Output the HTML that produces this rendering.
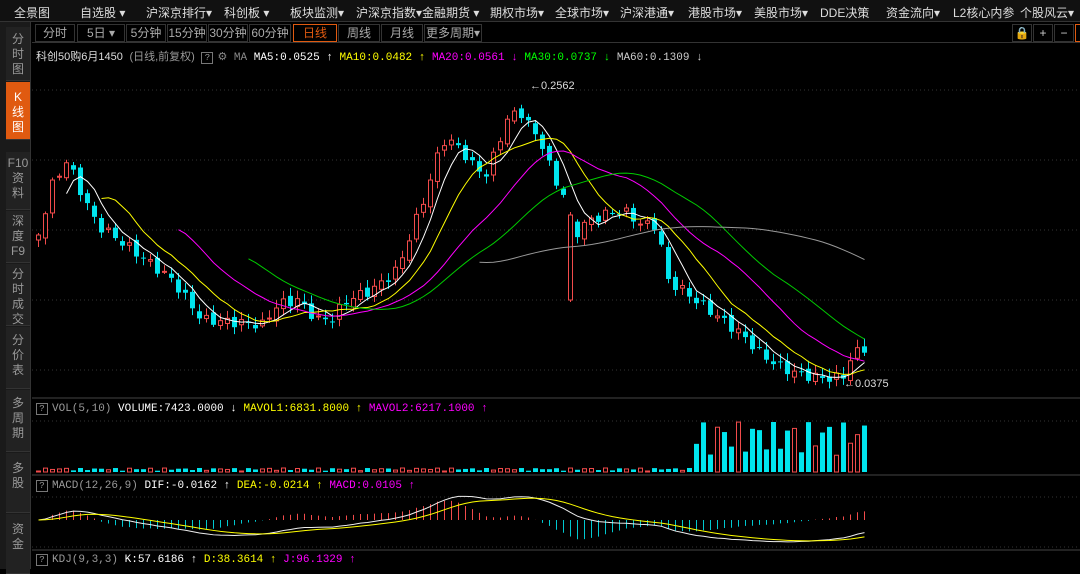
<!DOCTYPE html>
<html><head><meta charset="utf-8"><style>
*{margin:0;padding:0;box-sizing:border-box}
body{width:1080px;height:569px;background:#000;overflow:hidden;position:relative;font-family:"Liberation Sans","Noto Sans CJK SC",sans-serif;color:#ccc}
.top{position:absolute;left:0;top:0;width:1080px;height:22px;background:#111;border-bottom:1px solid #333;font-size:12px;color:#ddd}
.top span{position:absolute;top:4px;white-space:nowrap}
.side{position:absolute;left:0;top:22px;width:31px;height:547px;background:#1a1a1a;border-right:1px solid #333}
.side div{position:absolute;left:6px;width:24px;font-size:12px;color:#999;line-height:15px;text-align:center;background:#222;border-bottom:1px solid #333}
.bar{position:absolute;left:32px;top:22px;width:1048px;height:21px;border-bottom:1px solid #333;font-size:12px;color:#aaa}
.bar span{position:absolute;top:2px;height:18px;line-height:17px;border:1px solid #333;text-align:center}
.info{position:absolute;top:48px;font-size:11px;white-space:nowrap;font-family:"Liberation Mono","Noto Sans CJK SC",monospace}
.q{display:inline-block;width:12px;height:12px;border:1px solid #777;color:#999;font-size:9px;line-height:10px;text-align:center;margin-right:4px}
</style></head><body>
<div class="top">
<span style="left:14px">全景图</span><span style="left:80px">自选股 ▾</span><span style="left:146px">沪深京排行▾</span><span style="left:224px">科创板 ▾</span><span style="left:290px">板块监测▾</span><span style="left:356px">沪深京指数▾金融期货 ▾</span><span style="left:490px">期权市场▾</span><span style="left:555px">全球市场▾</span><span style="left:620px">沪深港通▾</span><span style="left:688px">港股市场▾</span><span style="left:754px">美股市场▾</span><span style="left:820px">DDE决策</span><span style="left:886px">资金流向▾</span><span style="left:953px">L2核心内参</span><span style="left:1020px">个股风云▾</span>
</div>
<div class="side">
<div style="top:5px;height:54px;padding-top:5px">分<br>时<br>图</div>
<div style="top:60px;height:58px;padding-top:8px;background:#e05a10;color:#fff">K<br>线<br>图</div>
<div style="top:130px;height:58px;padding-top:4px">F10<br>资<br>料</div>
<div style="top:189px;height:52px;padding-top:3px">深<br>度<br>F9</div>
<div style="top:242px;height:62px;padding-top:3px">分<br>时<br>成<br>交</div>
<div style="top:305px;height:62px;padding-top:6px">分<br>价<br>表</div>
<div style="top:368px;height:62px;padding-top:6px">多<br>周<br>期</div>
<div style="top:431px;height:60px;padding-top:8px">多<br>股</div>
<div style="top:492px;height:60px;padding-top:8px">资<br>金</div>
</div>
<div class="bar">
<span style="left:3px;width:40px">分时</span><span style="left:45px;width:48px">5日 ▾</span><span style="left:94px;width:40px">5分钟</span><span style="left:135px;width:40px">15分钟</span><span style="left:176px;width:40px">30分钟</span><span style="left:217px;width:42px">60分钟</span><span style="left:261px;width:44px;border-color:#e05a10;color:#e05a10">日线</span><span style="left:306px;width:42px">周线</span><span style="left:349px;width:42px">月线</span><span style="left:392px;width:58px">更多周期▾</span>
<span style="left:980px;width:20px;color:#ccc">🔒</span><span style="left:1001px;width:20px;color:#ccc">+</span><span style="left:1022px;width:20px;color:#ccc">−</span><span style="left:1043px;width:10px;border-color:#e05a10"></span>
</div>
<div class="info" style="left:36px"><span style="color:#ddd;font-family:'Liberation Sans','Noto Sans CJK SC'">科创50购6月1450</span> <span style="color:#999;font-family:'Liberation Sans','Noto Sans CJK SC'">(日线,前复权)</span> <span class="q">?</span><span style="color:#888">⚙ MA</span> <span style="color:#fff">MA5:0.0525 ↑</span> <span style="color:#ff0">MA10:0.0482 ↑</span> <span style="color:#f0f">MA20:0.0561 ↓</span> <span style="color:#0f0">MA30:0.0737 ↓</span> <span style="color:#ccc">MA60:0.1309 ↓</span></div>
<div class="info" style="left:36px;top:403px"><span class="q">?</span><span style="color:#999">VOL(5,10)</span> <span style="color:#fff">VOLUME:7423.0000 ↓</span> <span style="color:#ff0">MAVOL1:6831.8000 ↑</span> <span style="color:#f0f">MAVOL2:6217.1000 ↑</span></div>
<div class="info" style="left:36px;top:480px"><span class="q">?</span><span style="color:#999">MACD(12,26,9)</span> <span style="color:#fff">DIF:-0.0162 ↑</span> <span style="color:#ff0">DEA:-0.0214 ↑</span> <span style="color:#f0f">MACD:0.0105 ↑</span></div>
<div class="info" style="left:36px;top:554px"><span class="q">?</span><span style="color:#999">KDJ(9,3,3)</span> <span style="color:#fff">K:57.6186 ↑</span> <span style="color:#ff0">D:38.3614 ↑</span> <span style="color:#f0f">J:96.1329 ↑</span></div>
<svg id="s" width="1080" height="569" style="position:absolute;left:0;top:0" xmlns="http://www.w3.org/2000/svg">
<g stroke="#333" stroke-dasharray="1,3">
<line x1="32" y1="90" x2="1080" y2="90"/><line x1="32" y1="160" x2="1080" y2="160"/><line x1="32" y1="230" x2="1080" y2="230"/><line x1="32" y1="300" x2="1080" y2="300"/><line x1="32" y1="370" x2="1080" y2="370"/>
<line x1="32" y1="421" x2="1080" y2="421"/><line x1="32" y1="497" x2="1080" y2="497"/><line x1="32" y1="547" x2="1080" y2="547"/>
</g>
<g stroke="#444"><line x1="32" y1="398" x2="1080" y2="398"/><line x1="32" y1="475" x2="1080" y2="475"/><line x1="32" y1="550" x2="1080" y2="550"/></g>
<text x="530" y="89" fill="#ddd" font-size="11" font-family="Liberation Sans">←0.2562</text>
<text x="844" y="387" fill="#ddd" font-size="11" font-family="Liberation Sans">←0.0375</text>
</svg>
<script>
var K=[[36,235],[50,185],[65,160],[80,195],[95,225],[110,235],[130,250],[150,265],[170,280],[185,300],[200,320],[230,322],[260,325],[275,305],[295,300],[315,320],[330,318],[345,300],[370,290],[395,270],[410,230],[425,190],[440,140],[455,145],[470,165],[485,175],[495,145],[505,120],[517,110],[530,130],[540,145],[552,180],[562,195],[570,240],[580,225],[600,215],[620,210],[640,225],[655,225],[665,280],[680,290],[700,305],[720,320],[740,335],[760,355],[780,368],[800,375],[820,378],[840,378],[850,355],[862,348]];
function f(x){for(var i=1;i<K.length;i++)if(x<=K[i][0]){var a=K[i-1],b=K[i];return a[1]+(b[1]-a[1])*(x-a[0])/(b[0]-a[0]);}return K[K.length-1][1];}
var s='',xs=[],c=[],n=119;
for(var i=0;i<n;i++){var x=36+i*7;xs.push(x);c.push(f(x)+Math.sin(i*2.3)*5);}
for(var i=0;i<n;i++){var o=i?c[i-1]+Math.sin(i*1.7)*3:c[0]+5,cl=c[i];var hi=Math.min(o,cl)-2-Math.abs(Math.sin(i*3.1))*6,lo=Math.max(o,cl)+2+Math.abs(Math.cos(i*2.7))*5;
if(i==76){o=300;cl=215;hi=212;lo=302}
var up=cl<o,col=up?'#f24b4b':'#00e5ee',x=xs[i];
s+='<line x1="'+(x+2.5)+'" y1="'+hi+'" x2="'+(x+2.5)+'" y2="'+lo+'" stroke="'+col+'"/>';
var t=Math.min(o,cl),h=Math.max(1,Math.abs(o-cl));
s+=up?'<rect x="'+(x+.5)+'" y="'+t+'" width="4" height="'+h+'" fill="#000" stroke="'+col+'"/>':'<rect x="'+x+'" y="'+t+'" width="5" height="'+h+'" fill="'+col+'"/>';
var v=x<690?1+Math.abs(Math.sin(i*1.3))*3:10+Math.abs(Math.sin(i*1.9))*40;
s+=up?'<rect x="'+(x+.5)+'" y="'+(472-v)+'" width="4" height="'+v+'" fill="#000" stroke="'+col+'"/>':'<rect x="'+x+'" y="'+(472-v)+'" width="5" height="'+v+'" fill="'+col+'"/>';}
function ma(p,col,st){var d='';for(var i=st||p-1;i<n;i++){var m=0;for(var j=0;j<p;j++)m+=c[Math.max(0,i-j)];m/=p;d+=(d?'L':'M')+(xs[i]+2.5)+' '+m.toFixed(1);}s+='<path d="'+d+'" fill="none" stroke="'+col+'"/>';}
ma(5,'#fff',4);ma(10,'#ff0',9);ma(20,'#f0f',20);ma(30,'#0c0',30);ma(60,'#999',63);
var e12=400-c[0],e26=e12,dea=0,D=[],E=[],H=[];
for(var i=0;i<n;i++){var p=400-c[i];e12+=(p-e12)*2/13;e26+=(p-e26)*2/27;var dif=e12-e26;dea+=(dif-dea)*.2;D.push(dif);E.push(dea);H.push(2*(dif-dea));}
var z=520,k=0.6,dd='',de='';
for(var i=0;i<n;i++){var x=xs[i]+2.5;dd+=(i?'L':'M')+x+' '+(z-D[i]*k);de+=(i?'L':'M')+x+' '+(z-E[i]*k);
s+='<line x1="'+x+'" y1="'+z+'" x2="'+x+'" y2="'+(z-H[i]*k)+'" stroke="'+(H[i]>0?'#f24b4b':'#00c8d0')+'"/>';}
s+='<path d="'+dd+'" fill="none" stroke="#eee"/><path d="'+de+'" fill="none" stroke="#ff0"/>';
document.getElementById('s').insertAdjacentHTML('beforeend',s);
</script>
</body></html>
